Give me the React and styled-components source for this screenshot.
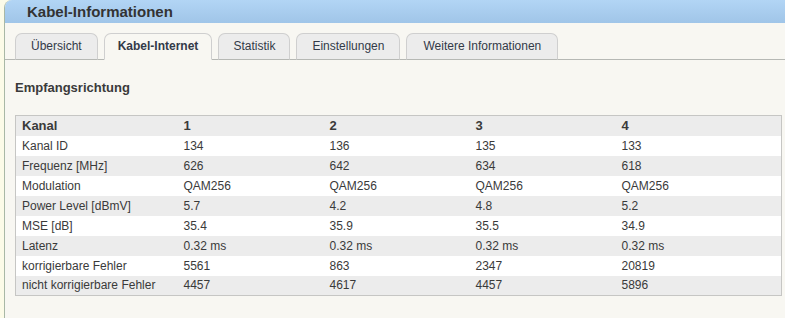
import React from 'react';
import styled, { createGlobalStyle } from 'styled-components';

const GlobalStyle = createGlobalStyle`
  html, body {
    margin: 0;
    padding: 0;
    background-color: #fcfbe8;
    font-family: "Liberation Sans", Arial, sans-serif;
  }
`;

const Page = styled.div`
  padding-left: 4px;
  height: 318px;
  overflow: hidden;
`;

const Panel = styled.div`
  height: 100%;
  background-color: #f8f7f2;
  border-left: 1px solid #a9b8a6;
  border-top-left-radius: 8px;
  overflow: hidden;
`;

const Header = styled.div`
  height: 23px;
  line-height: 24px;
  padding-left: 22px;
  background: linear-gradient(to bottom, #b2d5f5 0%, #a0c5e8 100%);
  color: #333;
  font-size: 15px;
  font-weight: bold;
`;

const TabBar = styled.div`
  display: flex;
  gap: 6px;
  margin-top: 10px;
  padding-left: 10px;
  border-bottom: 1px solid #b6b8b4;
`;

const Tab = styled.div`
  height: 25px;
  line-height: 25px;
  padding: 0 ${(p) => p.$pad || 14}px;
  margin-bottom: -1px;
  border: 1px solid #cfcfcf;
  border-bottom: ${(p) => (p.$active ? '1px solid #f8f7f2' : '1px solid #b6b8b4')};
  border-radius: 7px 7px 0 0;
  background-color: ${(p) => (p.$active ? '#f8f7f2' : '#ececec')};
  color: #333a48;
  font-size: 12px;
  font-weight: ${(p) => (p.$active ? 'bold' : 'normal')};
`;

const Content = styled.div`
  padding: 20px 3px 0 10px;
`;

const Heading = styled.div`
  font-size: 13px;
  font-weight: bold;
  line-height: 16px;
  color: #3a3a3a;
  margin-bottom: 19px;
`;

const Table = styled.table`
  width: 767px;
  border-collapse: collapse;
  table-layout: fixed;
  border: 1px solid #c6c6c4;
  font-size: 12px;
  color: #3a3a3a;
`;

const Row = styled.tr`
  height: 20px;
  background-color: ${(p) => (p.$shade ? '#ececec' : '#ffffff')};
`;

const HeadCell = styled.th`
  text-align: left;
  font-weight: bold;
  font-size: 13px;
  padding: 0 0 0 6px;
`;

const Cell = styled.td`
  padding: 0 0 0 6px;
  white-space: nowrap;
`;

const tabs = [
  { label: 'Übersicht', pad: 15 },
  { label: 'Kabel-Internet', active: true, pad: 13 },
  { label: 'Statistik', pad: 14 },
  { label: 'Einstellungen', pad: 15 },
  { label: 'Weitere Informationen', pad: 16 }
];

const rows = [
  ['Kanal ID', '134', '136', '135', '133'],
  ['Frequenz [MHz]', '626', '642', '634', '618'],
  ['Modulation', 'QAM256', 'QAM256', 'QAM256', 'QAM256'],
  ['Power Level [dBmV]', '5.7', '4.2', '4.8', '5.2'],
  ['MSE [dB]', '35.4', '35.9', '35.5', '34.9'],
  ['Latenz', '0.32 ms', '0.32 ms', '0.32 ms', '0.32 ms'],
  ['korrigierbare Fehler', '5561', '863', '2347', '20819'],
  ['nicht korrigierbare Fehler', '4457', '4617', '4457', '5896']
];

export default function App() {
  return (
    <Page>
      <GlobalStyle />
      <Panel>
        <Header>Kabel-Informationen</Header>
        <TabBar>
          {tabs.map((t) => (
            <Tab key={t.label} $active={t.active} $pad={t.pad}>
              {t.label}
            </Tab>
          ))}
        </TabBar>
        <Content>
          <Heading>Empfangsrichtung</Heading>
          <Table>
            <colgroup>
              <col style={{ width: 162 }} />
              <col style={{ width: 146 }} />
              <col style={{ width: 146 }} />
              <col style={{ width: 146 }} />
              <col />
            </colgroup>
            <thead>
              <Row $shade>
                <HeadCell>Kanal</HeadCell>
                <HeadCell>1</HeadCell>
                <HeadCell>2</HeadCell>
                <HeadCell>3</HeadCell>
                <HeadCell>4</HeadCell>
              </Row>
            </thead>
            <tbody>
              {rows.map((r, i) => (
                <Row key={r[0]} $shade={i % 2 === 1}>
                  {r.map((c, j) => (
                    <Cell key={j}>{c}</Cell>
                  ))}
                </Row>
              ))}
            </tbody>
          </Table>
        </Content>
      </Panel>
    </Page>
  );
}
